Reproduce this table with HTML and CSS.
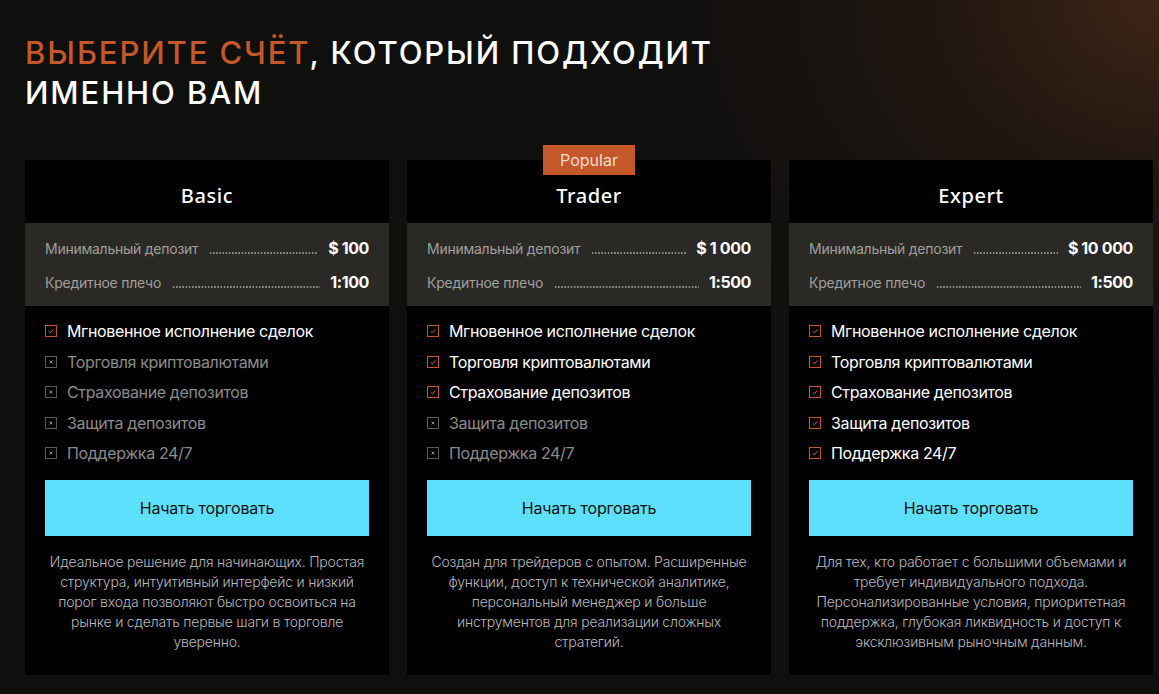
FILE: index.html
```html
<!DOCTYPE html>
<html lang="ru">
<head>
<meta charset="utf-8">
<title>Счета</title>
<link rel="stylesheet" href="styles.css">
</head>
<body>
<section class="page">
  <h1 class="heading"><span class="accent">Выберите счёт</span>, который подходит<br>именно вам</h1>
  <div class="cards">
    <article class="card">
      <h2 class="card-title">Basic</h2>
      <div class="specs">
        <div class="spec"><span class="spec-label">Минимальный депозит</span><span class="dots"></span><span class="spec-value">$ 100</span></div>
        <div class="spec"><span class="spec-label">Кредитное плечо</span><span class="dots"></span><span class="spec-value">1:100</span></div>
      </div>
      <ul class="features">
        <li class="feature on"><span class="box"><svg viewBox="0 0 12 12"><path d="M3.3 6.3 L5.2 8.1 L8.8 4.2"/></svg></span>Мгновенное исполнение сделок</li>
        <li class="feature off"><span class="box"><svg viewBox="0 0 12 12"><path d="M4.3 4.3 L7.7 7.7 M7.7 4.3 L4.3 7.7"/></svg></span>Торговля криптовалютами</li>
        <li class="feature off"><span class="box"><svg viewBox="0 0 12 12"><path d="M4.3 4.3 L7.7 7.7 M7.7 4.3 L4.3 7.7"/></svg></span>Страхование депозитов</li>
        <li class="feature off"><span class="box"><svg viewBox="0 0 12 12"><path d="M4.3 4.3 L7.7 7.7 M7.7 4.3 L4.3 7.7"/></svg></span>Защита депозитов</li>
        <li class="feature off"><span class="box"><svg viewBox="0 0 12 12"><path d="M4.3 4.3 L7.7 7.7 M7.7 4.3 L4.3 7.7"/></svg></span>Поддержка 24/7</li>
      </ul>
      <button class="cta">Начать торговать</button>
      <p class="desc">Идеальное решение для начинающих. Простая структура, интуитивный интерфейс и низкий порог входа позволяют быстро освоиться на рынке и сделать первые шаги в торговле уверенно.</p>
    </article>

    <article class="card">
      <span class="badge">Popular</span>
      <h2 class="card-title">Trader</h2>
      <div class="specs">
        <div class="spec"><span class="spec-label">Минимальный депозит</span><span class="dots"></span><span class="spec-value">$ 1&#8197;000</span></div>
        <div class="spec"><span class="spec-label">Кредитное плечо</span><span class="dots"></span><span class="spec-value">1:500</span></div>
      </div>
      <ul class="features">
        <li class="feature on"><span class="box"><svg viewBox="0 0 12 12"><path d="M3.3 6.3 L5.2 8.1 L8.8 4.2"/></svg></span>Мгновенное исполнение сделок</li>
        <li class="feature on"><span class="box"><svg viewBox="0 0 12 12"><path d="M3.3 6.3 L5.2 8.1 L8.8 4.2"/></svg></span>Торговля криптовалютами</li>
        <li class="feature on"><span class="box"><svg viewBox="0 0 12 12"><path d="M3.3 6.3 L5.2 8.1 L8.8 4.2"/></svg></span>Страхование депозитов</li>
        <li class="feature off"><span class="box"><svg viewBox="0 0 12 12"><path d="M4.3 4.3 L7.7 7.7 M7.7 4.3 L4.3 7.7"/></svg></span>Защита депозитов</li>
        <li class="feature off"><span class="box"><svg viewBox="0 0 12 12"><path d="M4.3 4.3 L7.7 7.7 M7.7 4.3 L4.3 7.7"/></svg></span>Поддержка 24/7</li>
      </ul>
      <button class="cta">Начать торговать</button>
      <p class="desc">Создан для трейдеров с опытом. Расширенные функции, доступ к технической аналитике, персональный менеджер и больше инструментов для реализации сложных стратегий.</p>
    </article>

    <article class="card">
      <h2 class="card-title">Expert</h2>
      <div class="specs">
        <div class="spec"><span class="spec-label">Минимальный депозит</span><span class="dots"></span><span class="spec-value">$ 10&#8197;000</span></div>
        <div class="spec"><span class="spec-label">Кредитное плечо</span><span class="dots"></span><span class="spec-value">1:500</span></div>
      </div>
      <ul class="features">
        <li class="feature on"><span class="box"><svg viewBox="0 0 12 12"><path d="M3.3 6.3 L5.2 8.1 L8.8 4.2"/></svg></span>Мгновенное исполнение сделок</li>
        <li class="feature on"><span class="box"><svg viewBox="0 0 12 12"><path d="M3.3 6.3 L5.2 8.1 L8.8 4.2"/></svg></span>Торговля криптовалютами</li>
        <li class="feature on"><span class="box"><svg viewBox="0 0 12 12"><path d="M3.3 6.3 L5.2 8.1 L8.8 4.2"/></svg></span>Страхование депозитов</li>
        <li class="feature on"><span class="box"><svg viewBox="0 0 12 12"><path d="M3.3 6.3 L5.2 8.1 L8.8 4.2"/></svg></span>Защита депозитов</li>
        <li class="feature on"><span class="box"><svg viewBox="0 0 12 12"><path d="M3.3 6.3 L5.2 8.1 L8.8 4.2"/></svg></span>Поддержка 24/7</li>
      </ul>
      <button class="cta">Начать торговать</button>
      <p class="desc">Для тех, кто работает с большими объемами и требует индивидуального подхода. Персонализированные условия, приоритетная поддержка, глубокая ликвидность и доступ к эксклюзивным рыночным данным.</p>
    </article>
  </div>
</section>
</body>
</html>
```

FILE: styles.css
```css
* { box-sizing: border-box; }

html, body {
  margin: 0;
  height: 100%;
}

body {
  background-color: #0f0f0e;
  background-image: radial-gradient(ellipse 520px 420px at 100% 0%, rgba(64, 38, 22, 0.95) 0%, rgba(40, 26, 18, 0.6) 45%, rgba(15, 15, 14, 0) 100%);
  background-repeat: no-repeat;
  font-family: Inter, "Noto Sans", sans-serif;
  color: #fff;
  overflow: hidden;
}

.page {
  padding: 33px 6px 0 25px;
}

.heading {
  margin: 0;
  font-family: Inter, sans-serif;
  font-weight: 500;
  font-size: 31px;
  line-height: 40px;
  text-transform: uppercase;
  letter-spacing: 1.9px;
  color: #fff;
}

.accent { color: #c4582a; }

.cards {
  margin-top: 47px;
  display: grid;
  grid-template-columns: repeat(3, 364px);
  gap: 18px;
}

.card {
  position: relative;
  background: #000;
  display: flex;
  flex-direction: column;
}

.badge {
  position: absolute;
  top: -15px;
  left: 50%;
  transform: translateX(-50%);
  width: 92px;
  height: 30px;
  background: #c4582a;
  color: #f3dcd0;
  font-size: 16px;
  line-height: 30px;
  text-align: center;
}

.card-title {
  margin: 0;
  height: 63px;
  display: flex;
  align-items: center;
  justify-content: center;
  font-family: "Noto Sans", sans-serif;
  font-weight: 500;
  font-size: 20px;
  letter-spacing: 0.6px;
  padding-top: 8px;
}

.specs {
  background: #2a2926;
  padding: 14px 20px 13px;
  display: flex;
  flex-direction: column;
  gap: 12px;
}

.spec {
  display: flex;
  align-items: baseline;
  height: 22px;
  line-height: 22px;
}

.spec-label {
  font-size: 14px;
  color: #a09f9c;
  letter-spacing: -0.25px;
  white-space: nowrap;
}

.dots {
  flex: 1;
  margin: 0 10px 0 11px;
  height: 2px;
  align-self: flex-end;
  margin-bottom: 5px;
  background-image: radial-gradient(circle, #8e8d8a 0.8px, transparent 1px);
  background-size: 3.2px 2px;
  background-repeat: repeat-x;
}

.spec-value {
  font-size: 16px;
  font-weight: 700;
  color: #fff;
  letter-spacing: -0.4px;
  white-space: nowrap;
}

.features {
  list-style: none;
  margin: 0;
  padding: 15px 20px 0;
  display: flex;
  flex-direction: column;
  gap: 10.5px;
}

.feature {
  display: flex;
  align-items: center;
  height: 20px;
  font-size: 16px;
  line-height: 20px;
  letter-spacing: -0.35px;
}

.box {
  width: 12px;
  height: 12px;
  margin-right: 10px;
  border: 1px solid;
  display: flex;
  flex-shrink: 0;
}

.box svg {
  width: 10px;
  height: 10px;
  fill: none;
  stroke-width: 1.2;
}

.feature.on { color: #fff; }
.feature.on .box { border-color: #c4582a; }
.feature.on .box svg { stroke: #d0632f; }

.feature.off { color: #8b8b8b; }
.feature.off .box { border-color: #5a5a5a; }
.feature.off .box svg { stroke: #8a8a8a; }

.cta {
  margin: 17px 20px 0;
  height: 56px;
  border: none;
  background: #5de0fd;
  color: #121212;
  font-family: Inter, sans-serif;
  font-size: 16px;
  letter-spacing: -0.2px;
  cursor: pointer;
}

.desc {
  margin: 16px 20px 23px;
  font-size: 14px;
  font-weight: 300;
  line-height: 20px;
  letter-spacing: -0.2px;
  color: #b8b8b8;
  text-align: center;
}
```
